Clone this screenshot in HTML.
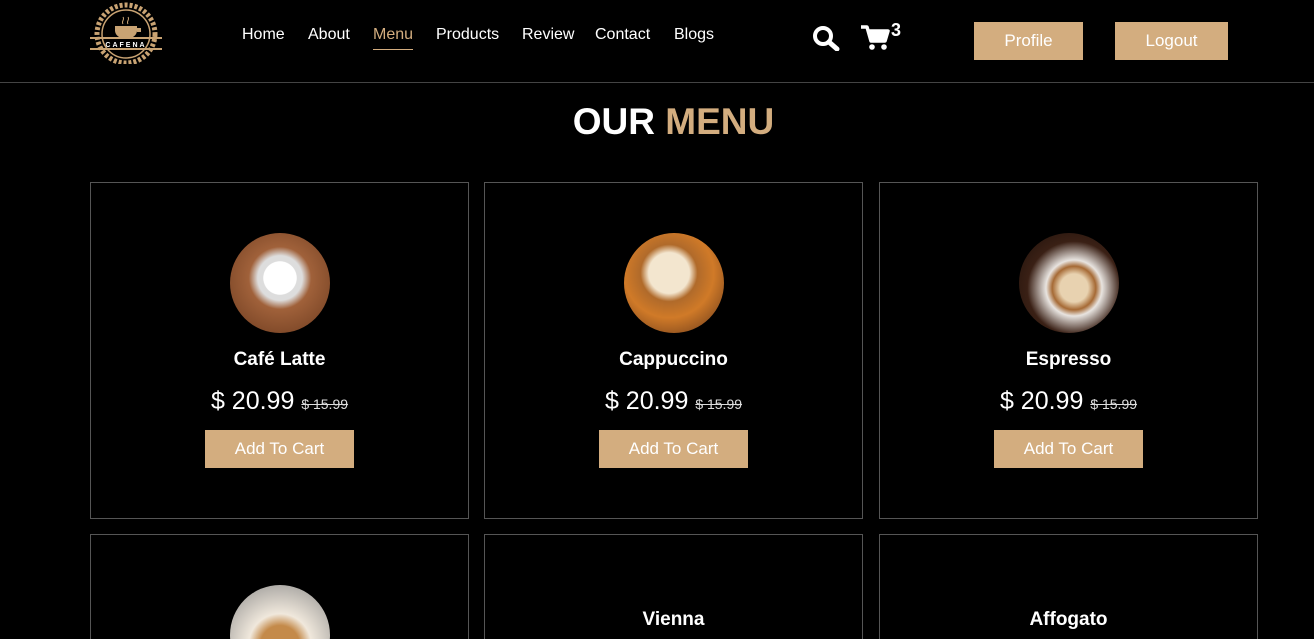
<!DOCTYPE html>
<html style="height:639px;overflow:hidden"><head><meta charset="utf-8"><style>
*{margin:0;padding:0;box-sizing:border-box}
body{width:1314px;height:639px;background:#000;color:#fff;font-family:"Liberation Sans",sans-serif;overflow:hidden;position:relative}
.hdr{position:absolute;left:0;top:0;width:1314px;height:83px;border-bottom:1px solid #444}
.nav a{position:absolute;top:26px;font-size:16px;color:#fff;text-decoration:none}
.btn{position:absolute;background:#d3ad7f;color:#fff;font-size:17px;text-align:center}
h1{position:absolute;top:101px;width:1314px;text-align:center;font-size:37px;font-weight:bold;padding-left:33px}
.card{position:absolute;width:379px;border:1px solid #555;height:337px;overflow:hidden}
.card.b{height:105px;border-bottom:none}
.circ{position:absolute;left:139px;top:50px;width:100px;height:100px;border-radius:50%}
.t{position:absolute;top:166px;width:100%;text-align:center;font-size:19px;font-weight:bold}
.p{position:absolute;top:204px;width:100%;text-align:center;font-size:25px}
.p s{font-size:14px;color:#ddd}
.ab{position:absolute;left:114px;top:247px;width:149px;height:38px;line-height:38px;background:#d3ad7f;text-align:center;font-size:17px}
</style></head><body>
<div class="hdr">
<svg style="position:absolute;left:88px;top:2px" width="76" height="62" viewBox="0 0 76 62">
<circle cx="38" cy="32" r="29" fill="none" stroke="#c9a373" stroke-width="5" stroke-dasharray="3 2"/>
<circle cx="38" cy="32" r="24" fill="#000" stroke="#c9a373" stroke-width="1.5"/>
<path d="M27 24h22v5a8 8 0 0 1-8 7h-6a8 8 0 0 1-8-7z M49 26h4v4h-4" fill="#c9a373"/>
<path d="M35 22c-2-3 2-4 0-7M40 22c-2-3 2-4 0-7" stroke="#c9a373" fill="none"/>
<rect x="2" y="35" width="72" height="2" fill="#c9a373"/><rect x="2" y="46" width="72" height="2" fill="#c9a373"/>
<text x="38" y="45" font-size="7" fill="#fff" text-anchor="middle" font-family="Liberation Sans" letter-spacing="2" font-weight="bold">CAFENA</text>
</svg>
<div class="nav">
<a style="left:242px">Home</a><a style="left:308px">About</a>
<a style="left:373px;color:#d3ad7f;border-bottom:1px solid #d3ad7f;padding-bottom:5px">Menu</a>
<a style="left:436px">Products</a><a style="left:522px">Review</a><a style="left:595px">Contact</a><a style="left:674px">Blogs</a>
</div>
<svg style="position:absolute;left:812px;top:25px" width="28" height="26" viewBox="0 0 28 26"><circle cx="11" cy="11" r="8" fill="none" stroke="#fff" stroke-width="4"/><path d="M17 17l8 7" stroke="#fff" stroke-width="5" stroke-linecap="round"/></svg>
<svg style="position:absolute;left:860px;top:25px" width="30" height="26" viewBox="0 0 30 26"><path d="M1 2h6l4 14h14l3-10H9" fill="none" stroke="#fff" stroke-width="3.5" stroke-linejoin="round"/><path d="M9 6h19l-3 10H11z" fill="#fff"/><circle cx="12" cy="22" r="2.8" fill="#fff"/><circle cx="24" cy="22" r="2.8" fill="#fff"/></svg>
<div style="position:absolute;left:891px;top:20px;font-size:18px;font-weight:bold">3</div>
<div class="btn" style="left:974px;top:22px;width:109px;height:38px;line-height:38px">Profile</div>
<div class="btn" style="left:1115px;top:22px;width:113px;height:38px;line-height:38px">Logout</div>
</div>
<h1>OUR <span style="color:#d3ad7f">MENU</span></h1>
<div class="card" style="left:90px;top:182px"><div class="circ" style="background:radial-gradient(circle at 50% 45%,#fff 0 22%,#ddd 23% 30%,#a0613a 42%,#6b3a1e 100%)"></div><div class="t">Café Latte</div><div class="p">$ 20.99 <s>$ 15.99</s></div><div class="ab">Add To Cart</div></div>
<div class="card" style="left:484px;top:182px"><div class="circ" style="background:radial-gradient(circle at 45% 40%,#f3e6cf 0 25%,#b06a2a 35%,#d07a28 55%,#5a3018 100%)"></div><div class="t">Cappuccino</div><div class="p">$ 20.99 <s>$ 15.99</s></div><div class="ab">Add To Cart</div></div>
<div class="card" style="left:879px;top:182px"><div class="circ" style="background:radial-gradient(circle at 55% 55%,#e8d2b0 0 18%,#a66a35 28%,#e8e4e0 36%,#3a2015 60%,#1a0e08 100%)"></div><div class="t">Espresso</div><div class="p">$ 20.99 <s>$ 15.99</s></div><div class="ab">Add To Cart</div></div>
<div class="card b" style="left:90px;top:534px"><div class="circ" style="background:radial-gradient(circle at 50% 60%,#c48a4a 0 25%,#f0e8dc 40%,#888 100%)"></div></div>
<div class="card b" style="left:484px;top:534px"><div class="t" style="top:74px">Vienna</div></div>
<div class="card b" style="left:879px;top:534px"><div class="t" style="top:74px">Affogato</div></div>
</body></html>
